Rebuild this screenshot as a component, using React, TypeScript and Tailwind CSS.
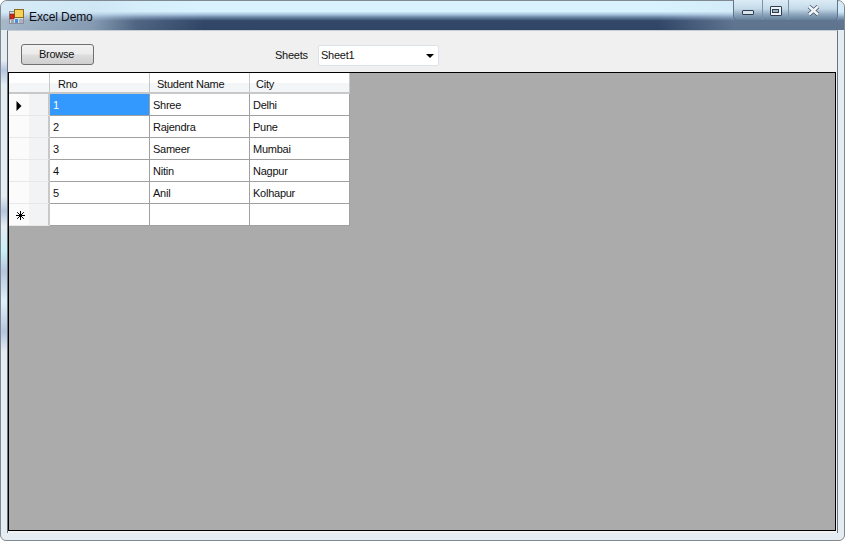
import { Fragment } from 'react';

const ROWS = [
  ['1', 'Shree', 'Delhi'],
  ['2', 'Rajendra', 'Pune'],
  ['3', 'Sameer', 'Mumbai'],
  ['4', 'Nitin', 'Nagpur'],
  ['5', 'Anil', 'Kolhapur'],
  ['', '', ''],
];

const HEADERS = [
  { label: 'Rno', pad: 'pl-[8px]' },
  { label: 'Student Name', pad: 'pl-[7px]' },
  { label: 'City', pad: 'pl-[6px]' },
];

function AppIcon() {
  return (
    <svg width="15" height="15" viewBox="0 0 15 15" className="shrink-0">
      <rect x="0.5" y="2.5" width="14" height="12" fill="#d8dde4" stroke="#8a8f98" />
      <rect x="5.5" y="0.5" width="9" height="8" fill="#f6d25a" stroke="#8a6d1a" />
      <rect x="1" y="5" width="4" height="5" fill="#d6281e" stroke="#7a1410" strokeWidth="0.6" />
      <rect x="2" y="11" width="3" height="3" fill="#9aa4b0" />
      <rect x="6" y="10" width="3" height="4" fill="#4d8ed8" />
      <rect x="10" y="10" width="4" height="4" fill="#a9b3bf" />
    </svg>
  );
}

function RowMarker({ row }: { row: number }) {
  if (row === 0) {
    return (
      <svg width="6" height="10" viewBox="0 0 6 10" className="ml-[7px] mt-[2px]">
        <path d="M0.5 0 L5.5 5 L0.5 10 Z" fill="#000" />
      </svg>
    );
  }
  if (row === 5) {
    return (
      <svg width="9" height="9" viewBox="0 0 9 9" className="ml-[7px] mt-[2px]" stroke="#000" strokeWidth="1">
        <path d="M4.5 0 V9 M0 4.5 H9 M1.2 1.2 L7.8 7.8 M7.8 1.2 L1.2 7.8" />
      </svg>
    );
  }
  return null;
}

export default function App() {
  return (
    <div className="w-[845px] h-[541px] overflow-hidden bg-white font-['Liberation_Sans',sans-serif] text-[11px] tracking-[-0.25px] text-[#111]">
      <div className="relative w-full h-full flex flex-col rounded-t-[7px] rounded-b-[6px] border border-[#808890] bg-[#e6edf2]">
        {/* title bar */}
        <div className="h-[29px] shrink-0 flex items-center gap-[5px] pl-[8px] pt-[2px] rounded-t-[7px] bg-[linear-gradient(90deg,rgba(215,232,243,0.7)_0%,rgba(200,222,238,0.55)_11%,rgba(200,220,235,0.2)_16%,rgba(200,220,235,0)_24%,rgba(200,220,235,0)_78%,rgba(200,220,235,0.3)_87%),linear-gradient(180deg,#d8f2fe_0%,#d8f2fe_36%,#a9c6df_46%,#6b86a6_56%,#34496a_68%,#2f4565_100%)]">
          <AppIcon />
          <span className="text-[12px] tracking-[-0.1px] text-[#0c0c14]">Excel Demo</span>
        </div>

        {/* window buttons */}
        <div className="absolute top-[-1px] right-[6px] w-[105px] h-[21px] flex rounded-b-[5px] border border-t-0 border-[#5f738c] bg-[linear-gradient(180deg,#dcecf6_0%,#c3d9e8_45%,#8aa2b9_75%,#64809c_100%)]">
          <div className="w-[29px] flex items-center justify-center border-r border-[#7d92a8]">
            <div className="w-[12px] h-[5px] mt-[5px] bg-[#dbe3ea] border border-[#2e3e52] rounded-[1px]" />
          </div>
          <div className="w-[26px] flex items-center justify-center border-r border-[#7d92a8]">
            <div className="w-[12px] h-[10px] mt-[1px] flex items-center justify-center bg-[#eef2f5] border border-[#2e3e52] rounded-[1px]">
              <div className="w-[7px] h-[4px] bg-[#9db3c6] border border-[#2e3e52]" />
            </div>
          </div>
          <div className="flex-1 flex items-center justify-center">
            <svg width="13" height="11" viewBox="0 0 13 11">
              <path d="M2 1.5 L11 9.5 M11 1.5 L2 9.5" stroke="#3e4e60" strokeWidth="4" />
              <path d="M2 1.5 L11 9.5 M11 1.5 L2 9.5" stroke="#f2f5f8" strokeWidth="2.6" />
            </svg>
          </div>
        </div>

        <div className="flex">
          {/* left frame strip, the glass shows the desktop through it */}
          <div className="w-[6px] h-[503px] shrink-0 bg-[linear-gradient(180deg,#e6edf2_0%,#e6edf2_6%,#b4c6e0_8%,#e6edf2_11%,#e6edf2_33%,#b4c6e0_36%,#e6edf2_39%,#c6f0f6_44%,#b4c6e0_48%,#e0f2f8_54%,#b4c6e0_60%,#e6edf2_64%,#e6edf2_100%)]" />

          {/* client area */}
          <div className="w-[831px] h-[503px] shrink-0 flex flex-col border-x border-t border-x-[#6a7280] border-t-[#c4ccd4] bg-[#f0f0f0]">
            {/* toolbar */}
            <div className="h-[41px] shrink-0 flex items-start pl-[13px] pt-[13px]">
              <button className="w-[73px] h-[21px] pr-[2px] rounded-[3px] border border-[#707070] bg-[linear-gradient(180deg,#f2f2f2_0%,#ebebeb_48%,#dddddd_52%,#cfcfcf_100%)] text-[11px] text-[#111]">
                Browse
              </button>
              <span className="ml-[181px] w-[33px] h-[21px] mt-[1px] flex items-center whitespace-nowrap">Sheets</span>
              <div className="ml-[10px] mt-[1px] w-[121px] h-[21px] flex items-center justify-between pl-[2px] pr-[4px] bg-white border border-[#dde3ea] rounded-[2px]">
                <span>Sheet1</span>
                <svg width="8" height="4" viewBox="0 0 8 4">
                  <path d="M0 0 H8 L4 4 Z" fill="#000" />
                </svg>
              </div>
            </div>

            {/* data grid */}
            <div className="flex-1 mr-[1px] mb-[2px] bg-[#ababab] border border-black">
              <div className="grid grid-cols-[41px_100px_100px_100px] grid-rows-[21px_repeat(6,22px)] w-[341px]">
                <div className="bg-[linear-gradient(180deg,#ffffff_0%,#ffffff_50%,#f3f5f7_55%,#f3f5f7_100%)] border-r border-b-2 border-[#c8c8c8]" />
                {HEADERS.map((h) => (
                  <div
                    key={h.label}
                    className={`flex items-center pt-[3px] ${h.pad} bg-[linear-gradient(180deg,#ffffff_0%,#ffffff_50%,#f3f5f7_55%,#f3f5f7_100%)] border-r border-b-2 border-[#c8c8c8]`}
                  >
                    {h.label}
                  </div>
                ))}
                {ROWS.map((row, i) => (
                  <Fragment key={i}>
                    <div className="flex items-center bg-[linear-gradient(90deg,#fbfbfb_0%,#fbfbfb_50%,#f2f3f5_52%,#f2f3f5_100%)] border-r-2 border-b border-r-[#c8c8c8] border-b-[#e8e8e8]">
                      <RowMarker row={i} />
                    </div>
                    {row.map((cell, j) => (
                      <div
                        key={j}
                        className={`flex items-center pl-[3px] pt-[1px] border-r border-b border-[#a0a0a0] ${
                          i === 0 && j === 0 ? 'bg-[#3399ff] text-white' : 'bg-white'
                        }`}
                      >
                        {cell}
                      </div>
                    ))}
                  </Fragment>
                ))}
              </div>
            </div>
          </div>
        </div>
      </div>
    </div>
  );
}
